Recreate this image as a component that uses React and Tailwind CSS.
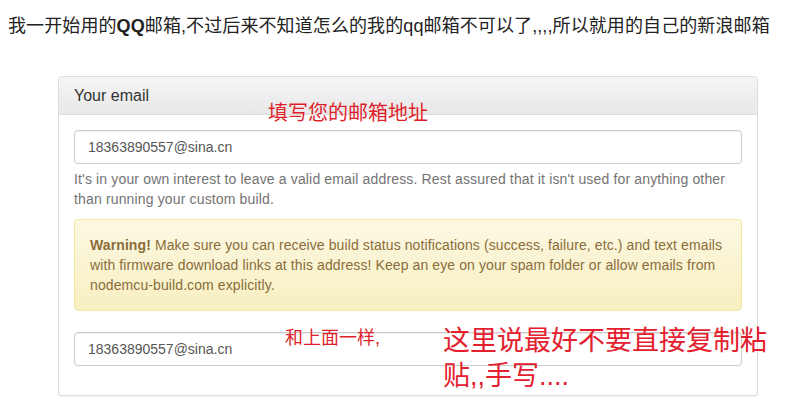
import React from 'react';

const sans = { fontFamily: '"Liberation Sans", "Noto Sans CJK SC", sans-serif' };

const EmailInput = ({ value }) => (
  <div className="h-[34px] w-full rounded-[4px] border border-[#cccccc] bg-white px-[13px] flex items-center text-[14px] text-[#555555] shadow-[inset_0_1px_1px_rgba(0,0,0,0.075)]">
    {value}
  </div>
);

export default function App() {
  return (
    <div className="relative w-[791px] h-[400px] bg-white overflow-hidden" style={sans}>
      <p className="pl-2 pt-[15px] text-[18px] leading-[22px] text-[#222222] whitespace-nowrap tracking-[0.1px]">
        我一开始用的<b>QQ</b>邮箱,不过后来不知道怎么的我的qq邮箱不可以了,,,,所以就用的自己的新浪邮箱
      </p>

      <div className="ml-[58px] mt-[39px] w-[700px] rounded-[4px] border border-[#dddddd] bg-white shadow-[0_1px_1px_rgba(0,0,0,0.05)]">
        <div className="h-[38px] px-[15px] flex items-center rounded-t-[3px] border-b border-[#dddddd] bg-gradient-to-b from-[#f5f5f5] to-[#e8e8e8] text-[16px] text-[#333333]">
          Your email
        </div>
        <div className="p-[15px] pb-[29px]">
          <EmailInput value="18363890557@sina.cn" />
          <p className="mt-[5px] mb-[10px] text-[14px] leading-[20px] text-[#737373] tracking-[0.15px]">
            It's in your own interest to leave a valid email address. Rest assured that it isn't used for anything other than running your custom build.
          </p>
          <div className="rounded-[4px] border border-[#f5e79e] bg-gradient-to-b from-[#fcf8e3] to-[#f8efc0] p-[15px] text-[14px] leading-[20px] text-[#8a6d3b] tracking-[0.1px]">
            <b>Warning!</b> Make sure you can receive build status notifications (success, failure, etc.) and text emails with firmware download links at this address! Keep an eye on your spam folder or allow emails from nodemcu-build.com explicitly.
          </div>
          <div className="mt-[21px]">
            <EmailInput value="18363890557@sina.cn" />
          </div>
        </div>
      </div>

      {/* red notes written on top of the screenshot */}
      <div className="absolute left-[268px] top-[102px] text-[20px] leading-[22px] text-[#e01f2c] whitespace-nowrap">
        填写您的邮箱地址
      </div>
      <div className="absolute left-[285px] top-[328px] text-[18px] leading-[20px] text-[#e01f2c] whitespace-nowrap">
        和上面一样,
      </div>
      <div className="absolute left-[443px] top-[324px] w-[330px] text-[27px] leading-[35px] text-[#e4202e]">
        这里说最好不要直接复制粘贴,,手写....
      </div>
    </div>
  );
}
